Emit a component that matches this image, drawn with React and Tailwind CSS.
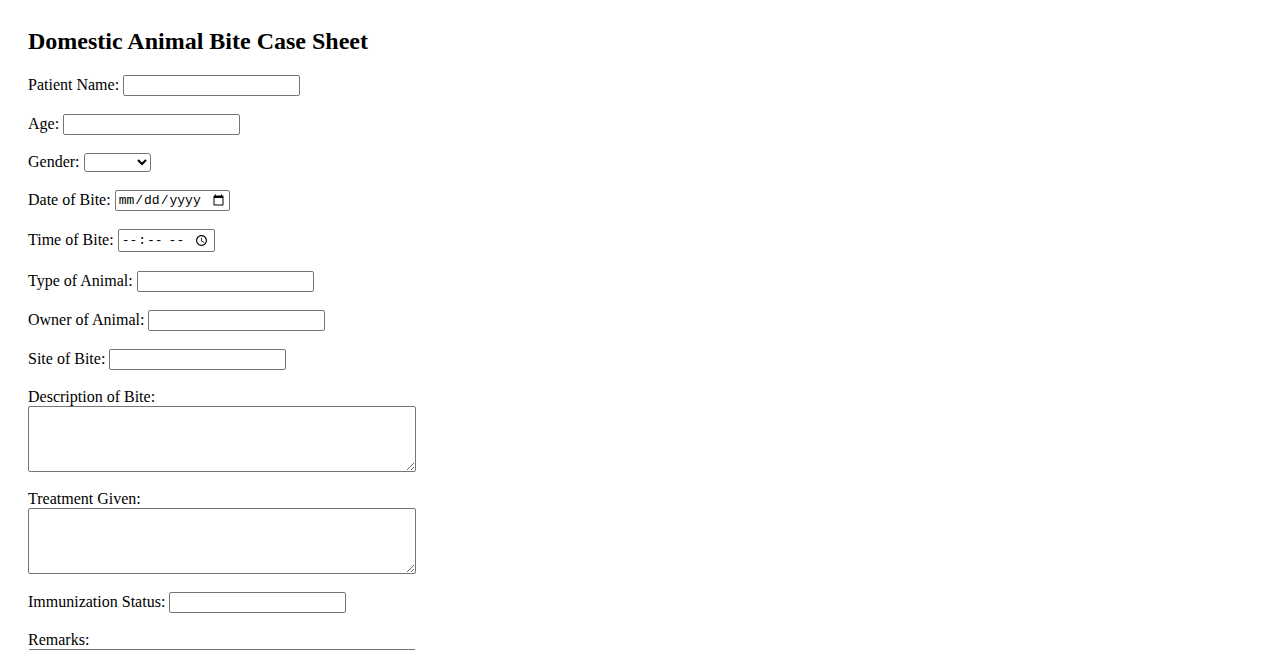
import React from 'react';

const fieldBox = 'h-[21px] w-[177px] rounded-[2px] border border-[#767676] bg-white px-[2px] text-[13px] align-middle';

function Row({ label, children, className = 'mt-[18px]' }) {
  return (
    <div className={`flex items-center ${className}`}>
      <label className="relative -top-px leading-[18px] mr-[4px]">{label}</label>
      {children}
    </div>
  );
}

function AreaField({ label }) {
  return (
    <div className="mt-[18px]">
      <label className="block leading-[18px]">{label}</label>
      <textarea className="block h-[66px] w-[388px] rounded-[2px] border border-[#767676] bg-white p-[2px] text-[13px]" />
    </div>
  );
}

export default function App() {
  return (
    <div
      className="min-h-screen bg-white pl-[28px] pt-[27px] pb-[20px] text-[16px] text-black"
      style={{ fontFamily: '"Liberation Serif", "Times New Roman", serif' }}
    >
      <h2 className="text-[24px] leading-[28px] font-bold">Domestic Animal Bite Case Sheet</h2>

      <form>
        <Row label="Patient Name:" className="mt-[20px]">
          <input type="text" className={fieldBox} />
        </Row>

        <Row label="Age:">
          <input type="text" className={fieldBox} />
        </Row>

        <Row label="Gender:">
          <select className="h-[19px] w-[67px] rounded-[3px] border border-[#767676] bg-white text-[13px]" style={{ fontFamily: '"Liberation Sans", Arial, sans-serif' }}>
            <option value=""></option>
            <option>Male</option>
            <option>Female</option>
            <option>Other</option>
          </select>
        </Row>

        <Row label="Date of Bite:">
          <input
            type="date"
            className="h-[21px] w-[115px] rounded-[2px] border border-[#767676] bg-white px-[2px] text-[13px]"
            style={{ fontFamily: '"Liberation Mono", "Courier New", monospace' }}
          />
        </Row>

        <Row label="Time of Bite:">
          <input
            type="time"
            className="h-[23px] w-[97px] rounded-[2px] border border-[#767676] bg-white px-[2px] text-[13px]"
            style={{ fontFamily: '"Liberation Mono", "Courier New", monospace' }}
          />
        </Row>

        <Row label="Type of Animal:" className="mt-[19px]">
          <input type="text" className={fieldBox} />
        </Row>

        <Row label="Owner of Animal:">
          <input type="text" className={fieldBox} />
        </Row>

        <Row label="Site of Bite:">
          <input type="text" className={fieldBox} />
        </Row>

        <AreaField label="Description of Bite:" />
        <AreaField label="Treatment Given:" />

        <Row label="Immunization Status:">
          <input type="text" className={fieldBox} />
        </Row>

        <AreaField label="Remarks:" />
      </form>
    </div>
  );
}
